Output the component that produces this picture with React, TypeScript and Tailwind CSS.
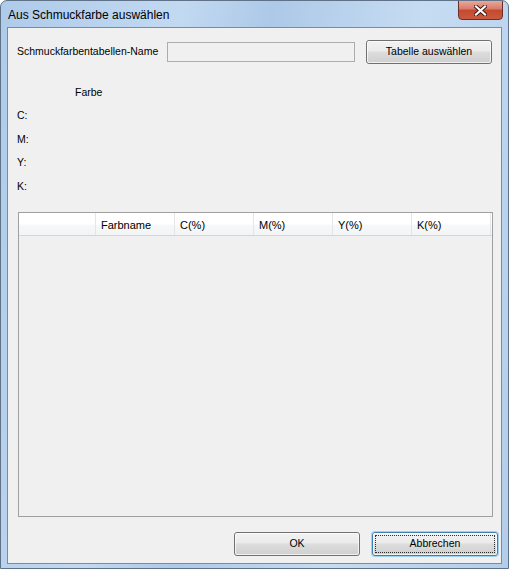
import React from "react";

const columns = ["", "Farbname", "C(%)", "M(%)", "Y(%)", "K(%)"];
const cmyk = ["C:", "M:", "Y:", "K:"];

// Win7 Standard-Schaltfläche
const WinButton = ({
  label,
  className,
  focused,
}: {
  label: string;
  className?: string;
  focused?: boolean;
}) => (
  <div
    className={`relative flex items-center justify-center h-[24px] rounded-[3px] border ${
      focused ? "border-[#3c7fb1] shadow-[0_0_0_1px_#9fd3f5]" : "border-[#707070]"
    } bg-[linear-gradient(#f2f2f2_0%,#ebebeb_45%,#dddddd_50%,#cfcfcf_100%)] text-black ${
      className ?? ""
    }`}
  >
    <div className="absolute inset-0 rounded-[2px] border border-white/70" />
    {focused && (
      <div className="absolute inset-[2px] border border-dotted border-black/80" />
    )}
    <span className="relative">{label}</span>
  </div>
);

export default function App() {
  return (
    <div
      className="w-[509px] h-[569px] flex flex-col rounded-t-[7px] border border-[#5f7288] bg-[linear-gradient(100deg,#aecbea_0%,#c2d9f1_30%,#adc9e8_45%,#c6dcf2_70%,#b3cdea_100%)] overflow-hidden"
      style={{ fontFamily: '"Liberation Sans", Arial, sans-serif' }}
    >
      {/* Titelleiste */}
      <div className="h-[26px] flex items-start justify-between shrink-0">
        <span className="pl-[7px] pt-[5px] text-[12px] text-black">
          Aus Schmuckfarbe auswählen
        </span>
        <div className="relative mr-[5px] -mt-px w-[45px] h-[20px] rounded-b-[4px] border border-[#6b2f2a] bg-[linear-gradient(#e8a999_0%,#d8786a_45%,#c7482f_50%,#c85a40_100%)] flex items-center justify-center">
          <svg width="13" height="11" viewBox="0 0 13 11">
            <path
              d="M2 1.5 L11 9.5 M11 1.5 L2 9.5"
              stroke="#3b1a16"
              strokeWidth="4"
              strokeLinecap="square"
            />
            <path
              d="M2 1.5 L11 9.5 M11 1.5 L2 9.5"
              stroke="#ffffff"
              strokeWidth="2.2"
              strokeLinecap="square"
            />
          </svg>
        </div>
      </div>

      {/* Client-Bereich */}
      <div className="mx-[6px] h-[537px] border border-[#7b8a9c] bg-[#f0f0f0] flex flex-col pl-[9px] pr-[3px] pt-[12px] text-[10.5px] text-black">
        <div className="flex items-center h-[24px] pr-[6px]">
          <span className="w-[150px]">Schmuckfarbentabellen-Name</span>
          <div className="w-[188px] h-[20px] border border-[#acacac] bg-[#f0f0f0]" />
          <WinButton label="Tabelle auswählen" className="ml-[11px] w-[126px]" />
        </div>

        <div className="mt-[17px] flex flex-col">
          <div className="h-[23.5px] flex items-center pl-[58px]">Farbe</div>
          {cmyk.map((c) => (
            <div key={c} className="h-[23.5px] flex items-center">
              {c}
            </div>
          ))}
        </div>

        <div className="mt-[13px] ml-[1px] w-[475px] h-[305px] border border-[#a0a0a0] bg-[#f0f0f0] flex flex-col">
          <div className="flex h-[23px] bg-[linear-gradient(#ffffff_0%,#ffffff_50%,#f7f8f9_55%,#f3f4f6_100%)] border-b border-[#d5d5d5]">
            {columns.map((col, i) => (
              <div
                key={i}
                className={`${
                  i === 0 ? "w-[77px]" : "w-[79px]"
                } flex items-center pl-[5px] pt-[3px] border-r border-[#e3e5e7] text-[11px]`}
              >
                {col}
              </div>
            ))}
          </div>
        </div>

        <div className="mt-[15px] flex justify-end gap-[12px]">
          <WinButton label="OK" className="w-[126px]" />
          <WinButton label="Abbrechen" className="w-[126px]" focused />
        </div>
      </div>
    </div>
  );
}
